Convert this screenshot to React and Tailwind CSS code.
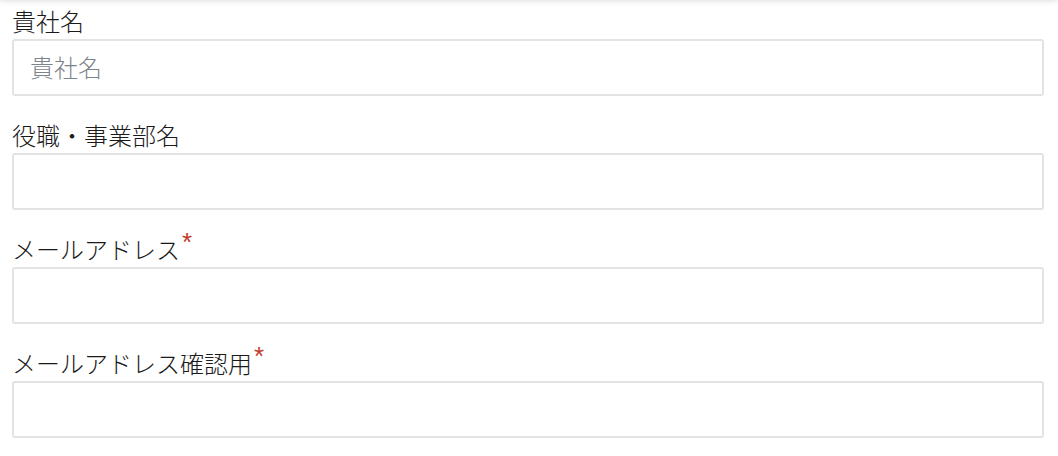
import React from "react";

const fields = [
  { label: "貴社名", placeholder: "貴社名", required: false },
  { label: "役職・事業部名", placeholder: "", required: false },
  { label: "メールアドレス", placeholder: "", required: true },
  { label: "メールアドレス確認用", placeholder: "", required: true },
];

export default function App() {
  return (
    <div
      className="relative w-[1058px] h-[456px] bg-white overflow-hidden"
      style={{ fontFamily: '"Noto Sans CJK JP", "Noto Sans", sans-serif' }}
    >
      <div className="absolute left-0 right-0 top-[-6px] h-[6px] shadow-[0_0_6px_rgba(0,0,0,0.18)]" />
      <div className="flex flex-col pt-[3px] pl-[12px] pr-[14px]">
        {fields.map((f, i) => (
          <div key={i} className="flex flex-col mb-[21px]">
            <label className="h-[36px] leading-[36px] text-[24px] font-light text-[#1a1a1a] whitespace-nowrap">
              {f.label}
              {f.required && (
                <span
                  className="relative top-[-8px] ml-[2px] text-[26px] leading-none text-[#c0392b]"
                  style={{ fontFamily: '"Liberation Sans", Arial, sans-serif' }}
                >
                  *
                </span>
              )}
            </label>
            <input
              type="text"
              placeholder={f.placeholder}
              className="h-[57px] w-full border-2 border-[#e3e3e3] rounded-[3px] px-[16px] pb-[3px] text-[24px] font-light text-[#333] placeholder:text-[#7d838b] outline-none"
              style={{ fontFamily: '"Noto Sans CJK JP", "Noto Sans", sans-serif' }}
            />
          </div>
        ))}
      </div>
    </div>
  );
}
